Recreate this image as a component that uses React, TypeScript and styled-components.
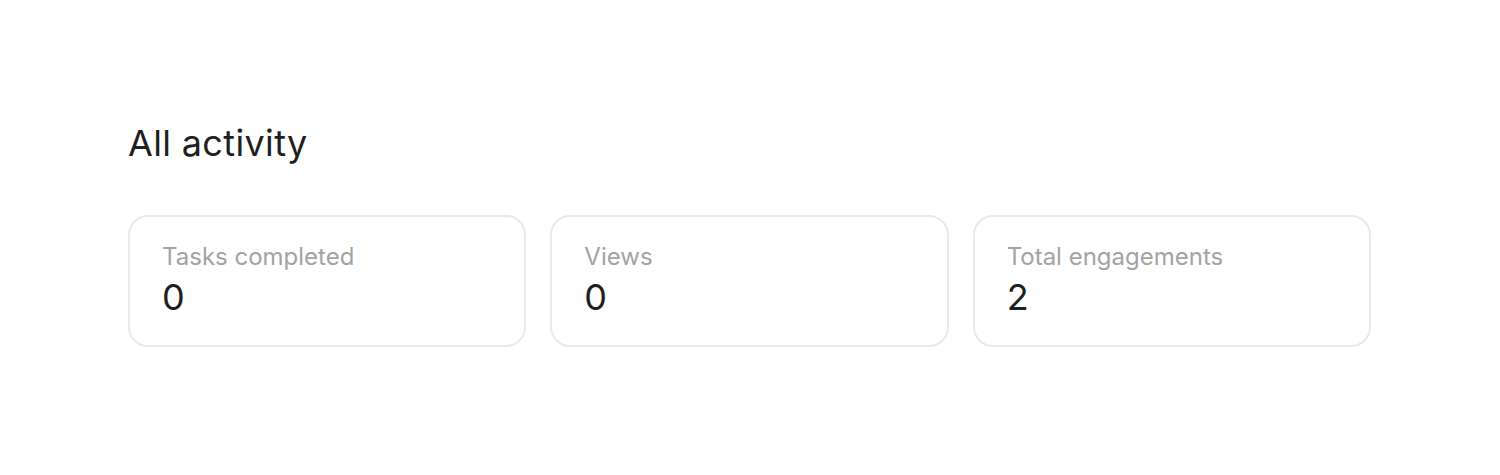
import styled, { createGlobalStyle } from "styled-components";

const GlobalStyle = createGlobalStyle`
  body {
    margin: 0;
    background: #ffffff;
    font-family: Inter, "Noto Sans", sans-serif;
  }
`;

const stats = [
  { label: "Tasks completed", value: 0 },
  { label: "Views", value: 0 },
  { label: "Total engagements", value: 2 },
];

export default function App() {
  return (
    <>
      <GlobalStyle />
      <Page>
        <Title>All activity</Title>
        <Grid>
          {stats.map((s) => (
            <Card key={s.label}>
              <Label>{s.label}</Label>
              <Value>{s.value}</Value>
            </Card>
          ))}
        </Grid>
      </Page>
    </>
  );
}

const Page = styled.div`
  padding: 121px 129px 0 128px;
`;

const Title = styled.h1`
  margin: 0;
  font-size: 36px;
  line-height: 44px;
  font-weight: 400;
  letter-spacing: 0.35px;
  color: #1f1f1f;
`;

const Grid = styled.div`
  margin-top: 50px;
  display: grid;
  grid-template-columns: repeat(3, 1fr);
  gap: 24px;
`;

const Card = styled.div`
  box-sizing: border-box;
  height: 132px;
  padding: 25px 32px 0;
  border: 2px solid #e9e9e9;
  border-radius: 20px;
  display: flex;
  flex-direction: column;
  gap: 4px;
`;

const Label = styled.div`
  font-size: 24px;
  line-height: 29px;
  color: #a3a3a3;
`;

const Value = styled.div`
  font-size: 36px;
  line-height: 44px;
  color: #1f1f1f;
`;
